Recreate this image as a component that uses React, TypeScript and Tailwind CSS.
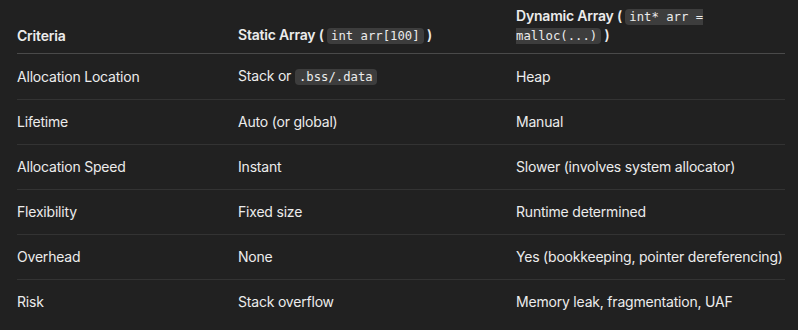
import React from "react";

const Code = ({ children }: { children: React.ReactNode }) => (
  <code className="rounded-[4px] bg-[#3d3d3d] px-[4px] py-[1px] font-['DejaVu_Sans_Mono',monospace] text-[12.25px] font-normal tracking-normal text-[#ececec]">
    {children}
  </code>
);

const rows: [React.ReactNode, React.ReactNode, React.ReactNode][] = [
  ["Allocation Location", <>Stack or <Code>.bss/.data</Code></>, "Heap"],
  ["Lifetime", "Auto (or global)", "Manual"],
  ["Allocation Speed", "Instant", "Slower (involves system allocator)"],
  ["Flexibility", "Fixed size", "Runtime determined"],
  ["Overhead", "None", "Yes (bookkeeping, pointer dereferencing)"],
  ["Risk", "Stack overflow", "Memory leak, fragmentation, UAF"],
];

export default function App() {
  return (
    <div className="h-[330px] w-[798px] overflow-hidden bg-[#212121] font-['Inter',sans-serif] text-[14px] tracking-[-0.2px] text-[#ececec]">
      <table className="ml-[17px] w-[768px] table-fixed border-collapse">
        <colgroup>
          <col className="w-[221px]" />
          <col className="w-[278px]" />
          <col className="w-[269px]" />
        </colgroup>
        <thead>
          <tr className="border-b border-[#4a4a4a]">
            <th className="pb-[8px] pt-[7px] text-left align-bottom font-semibold leading-[18px]">Criteria</th>
            <th className="pb-[8px] pt-[7px] text-left align-bottom font-semibold leading-[18px]">
              Static Array ( <Code>int arr[100]</Code> )
            </th>
            <th className="pb-[8px] pt-[7px] text-left align-bottom font-semibold leading-[18px]">
              Dynamic Array ( <Code>int* arr = malloc(...)</Code> )
            </th>
          </tr>
        </thead>
        <tbody>
          {rows.map((r, i) => (
            <tr key={i} className={i < rows.length - 1 ? "border-b border-[#333333]" : ""}>
              <td className="py-[12px] align-middle leading-[20px]">{r[0]}</td>
              <td className="py-[12px] align-middle leading-[20px]">{r[1]}</td>
              <td className="py-[12px] align-middle leading-[20px] whitespace-nowrap">{r[2]}</td>
            </tr>
          ))}
        </tbody>
      </table>
    </div>
  );
}
